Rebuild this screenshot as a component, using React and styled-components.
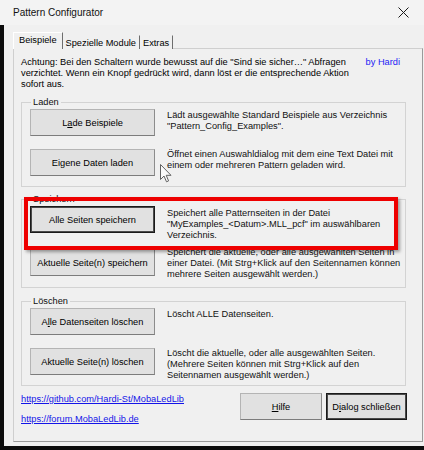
import React from 'react';
import styled, { createGlobalStyle } from 'styled-components';

const GlobalStyle = createGlobalStyle`
  html, body {
    margin: 0;
    padding: 0;
    background: #0c0c0c;
  }
`;

const Screen = styled.div`
  position: relative;
  width: 424px;
  height: 450px;
  overflow: hidden;
  background: #0c0c0c;
  font-family: "Liberation Sans", Arial, sans-serif;
  font-size: 9.25px;
  color: #000;
`;

const TitleBar = styled.div`
  height: 25px;
  display: flex;
  align-items: center;
  justify-content: space-between;
  padding: 0 15px 0 13px;
  background: #f3f3f3;
  font-size: 10px;
  color: #111;
`;

const WindowBody = styled.div`
  margin-left: 4px;
  height: 421px;
  box-sizing: border-box;
  padding: 7px 0 0 9px;
  background: #f0f0f0;
`;

const TabStrip = styled.div`
  display: flex;
  align-items: flex-end;
  height: 17px;
  margin-bottom: -1px;
  position: relative;
  z-index: 1;
`;

const Tab = styled.div`
  display: flex;
  align-items: center;
  box-sizing: border-box;
  height: ${(p) => (p.$active ? '17px' : '14px')};
  padding: ${(p) => (p.$active ? '0 5px 2px 5px' : '0 3px 0 2px')};
  border-right: 1px solid #6e6e6e;
  border-top: 1px solid ${(p) => (p.$active ? '#ffffff' : 'transparent')};
  border-left: 1px solid ${(p) => (p.$active ? '#ffffff' : 'transparent')};
  background: #f0f0f0;
  white-space: nowrap;
`;

const Panel = styled.div`
  width: 410px;
  height: 394px;
  box-sizing: border-box;
  padding: 8px 16px 0 7px;
  border: 1px solid #cfcfcf;
  border-right-color: #9a9a9a;
  border-bottom-color: #9a9a9a;
  display: flex;
  flex-direction: column;
`;

const NoticeRow = styled.div`
  display: flex;
  justify-content: space-between;
  align-items: flex-start;
  line-height: 11px;
  margin-bottom: 7px;
`;

const Notice = styled.div`
  white-space: nowrap;
`;

const Author = styled.span`
  color: #1c1cf5;
  margin-right: 6px;
`;

const Group = styled.fieldset`
  margin: 0 0 ${(p) => p.$after || 0}px 0;
  padding: 2px 0 ${(p) => p.$bottom || 10}px 8px;
  min-width: 0;
  border: 1px solid #d3d3d3;
  display: flex;
  flex-direction: column;
  gap: ${(p) => p.$gap || 13}px;
`;

const Caption = styled.legend`
  padding: 0 2px;
  margin-left: 1px;
  line-height: 10px;
  color: #111;
`;

const ActionRow = styled.div`
  display: flex;
  align-items: flex-start;
  gap: 12px;
  height: 27px;
`;

const Button = styled.button`
  flex: none;
  width: ${(p) => p.$width || 125}px;
  height: 27px;
  padding: 0;
  box-sizing: border-box;
  font-family: inherit;
  font-size: 9.25px;
  color: #000;
  background: #e1e1e1;
  border: 1px solid #b4b4b4;
  border-right-color: #8c8c8c;
  border-bottom-color: #7c7c7c;
  box-shadow: ${(p) => (p.$default ? 'inset 0 0 0 1px #4a4a4a' : 'none')};
  ${(p) => p.$default && 'border-color: #1a1a1a;'}
  cursor: default;
`;

const Description = styled.div`
  margin-top: ${(p) => p.$shift || 0}px;
  padding-top: 1px;
  line-height: 11px;
  white-space: nowrap;
  color: #111;
`;

const Key = styled.span`
  text-decoration: underline;
`;

const Footer = styled.div`
  display: flex;
  justify-content: space-between;
  align-items: flex-start;
  margin-top: 7px;
  margin-right: -1px;
`;

const Links = styled.div`
  display: flex;
  flex-direction: column;
  gap: 9px;
  padding-top: 1px;
  line-height: 11px;
`;

const Link = styled.a`
  color: #1414e8;
  text-decoration: underline;
`;

const FooterButtons = styled.div`
  display: flex;
  gap: 4px;
`;

const Highlight = styled.div`
  position: absolute;
  left: 24px;
  top: 197px;
  width: 374px;
  height: 53px;
  box-sizing: border-box;
  border: 4px solid #ee0000;
  box-shadow: 2px 2px 3px rgba(0, 0, 0, 0.35);
  pointer-events: none;
`;

const Pointer = styled.svg`
  position: absolute;
  left: 160px;
  top: 164px;
  opacity: 0.75;
  pointer-events: none;
`;

const CloseIcon = () => (
  <svg width="11" height="11" viewBox="0 0 11 11">
    <path d="M0.5 0.5 L10.5 10.5 M10.5 0.5 L0.5 10.5" stroke="#1a1a1a" strokeWidth="1" fill="none" />
  </svg>
);

const App = () => {
  return (
    <Screen>
      <GlobalStyle />
      <TitleBar>
        <span>Pattern Configurator</span>
        <CloseIcon />
      </TitleBar>
      <WindowBody>
        <TabStrip>
          <Tab $active>Beispiele</Tab>
          <Tab>Spezielle Module</Tab>
          <Tab>Extras</Tab>
        </TabStrip>
        <Panel>
          <NoticeRow>
            <Notice>
              Achtung: Bei den Schaltern wurde bewusst auf die "Sind sie sicher…" Abfragen
              <br />
              verzichtet. Wenn ein Knopf gedrückt wird, dann löst er die entsprechende Aktion
              <br />
              sofort aus.
            </Notice>
            <Author>by Hardi</Author>
          </NoticeRow>

          <Group $after={7}>
            <Caption>Laden</Caption>
            <ActionRow>
              <Button>L<Key>a</Key>de Beispiele</Button>
              <Description>
                Lädt ausgewählte Standard Beispiele aus Verzeichnis
                <br />
                "Pattern_Config_Examples".
              </Description>
            </ActionRow>
            <ActionRow>
              <Button>Eigene Daten laden</Button>
              <Description $shift={-1}>
                Öffnet einen Auswahldialog mit dem eine Text Datei mit
                <br />
                einem oder mehreren Pattern geladen wird.
              </Description>
            </ActionRow>
          </Group>

          <Group $after={8} $gap={16} $bottom={11}>
            <Caption>Speichern</Caption>
            <ActionRow>
              <Button $default>Alle Seiten speichern</Button>
              <Description $shift={1}>
                Speichert alle Patternseiten in der Datei
                <br />
                "MyExamples_&lt;Datum&gt;.MLL_pcf" im auswählbaren
                <br />
                Verzeichnis.
              </Description>
            </ActionRow>
            <ActionRow>
              <Button>Aktuelle Seite(n) speichern</Button>
              <Description $shift={-3}>
                Speichert die aktuelle, oder alle ausgewählten Seiten in
                <br />
                einer Datei. (Mit Strg+Klick auf den Seitennamen können
                <br />
                mehrere Seiten ausgewählt werden.)
              </Description>
            </ActionRow>
          </Group>

          <Group>
            <Caption>Löschen</Caption>
            <ActionRow>
              <Button>A<Key>l</Key>le Datenseiten löschen</Button>
              <Description>Löscht ALLE Datenseiten.</Description>
            </ActionRow>
            <ActionRow>
              <Button>Aktuelle Seite(n) löschen</Button>
              <Description $shift={-1}>
                Löscht die aktuelle, oder alle ausgewählten Seiten.
                <br />
                (Mehrere Seiten können mit Strg+Klick auf den
                <br />
                Seitennamen ausgewählt werden.)
              </Description>
            </ActionRow>
          </Group>

          <Footer>
            <Links>
              <Link href="#">https://github.com/Hardi-St/MobaLedLib</Link>
              <Link href="#">https://forum.MobaLedLib.de</Link>
            </Links>
            <FooterButtons>
              <Button $width={82}><Key>H</Key>ilfe</Button>
              <Button $width={81} $default>D<Key>i</Key>alog schließen</Button>
            </FooterButtons>
          </Footer>
        </Panel>
      </WindowBody>

      <Highlight />
      <Pointer width="12" height="19" viewBox="0 0 12 19">
        <path d="M0.5 0.5 L0.5 15.5 L4 12 L6.5 17.8 L8.6 16.9 L6.2 11.3 L11 11.3 Z" fill="#ffffff" stroke="#333" strokeWidth="1" />
      </Pointer>
    </Screen>
  );
};

export default App;
